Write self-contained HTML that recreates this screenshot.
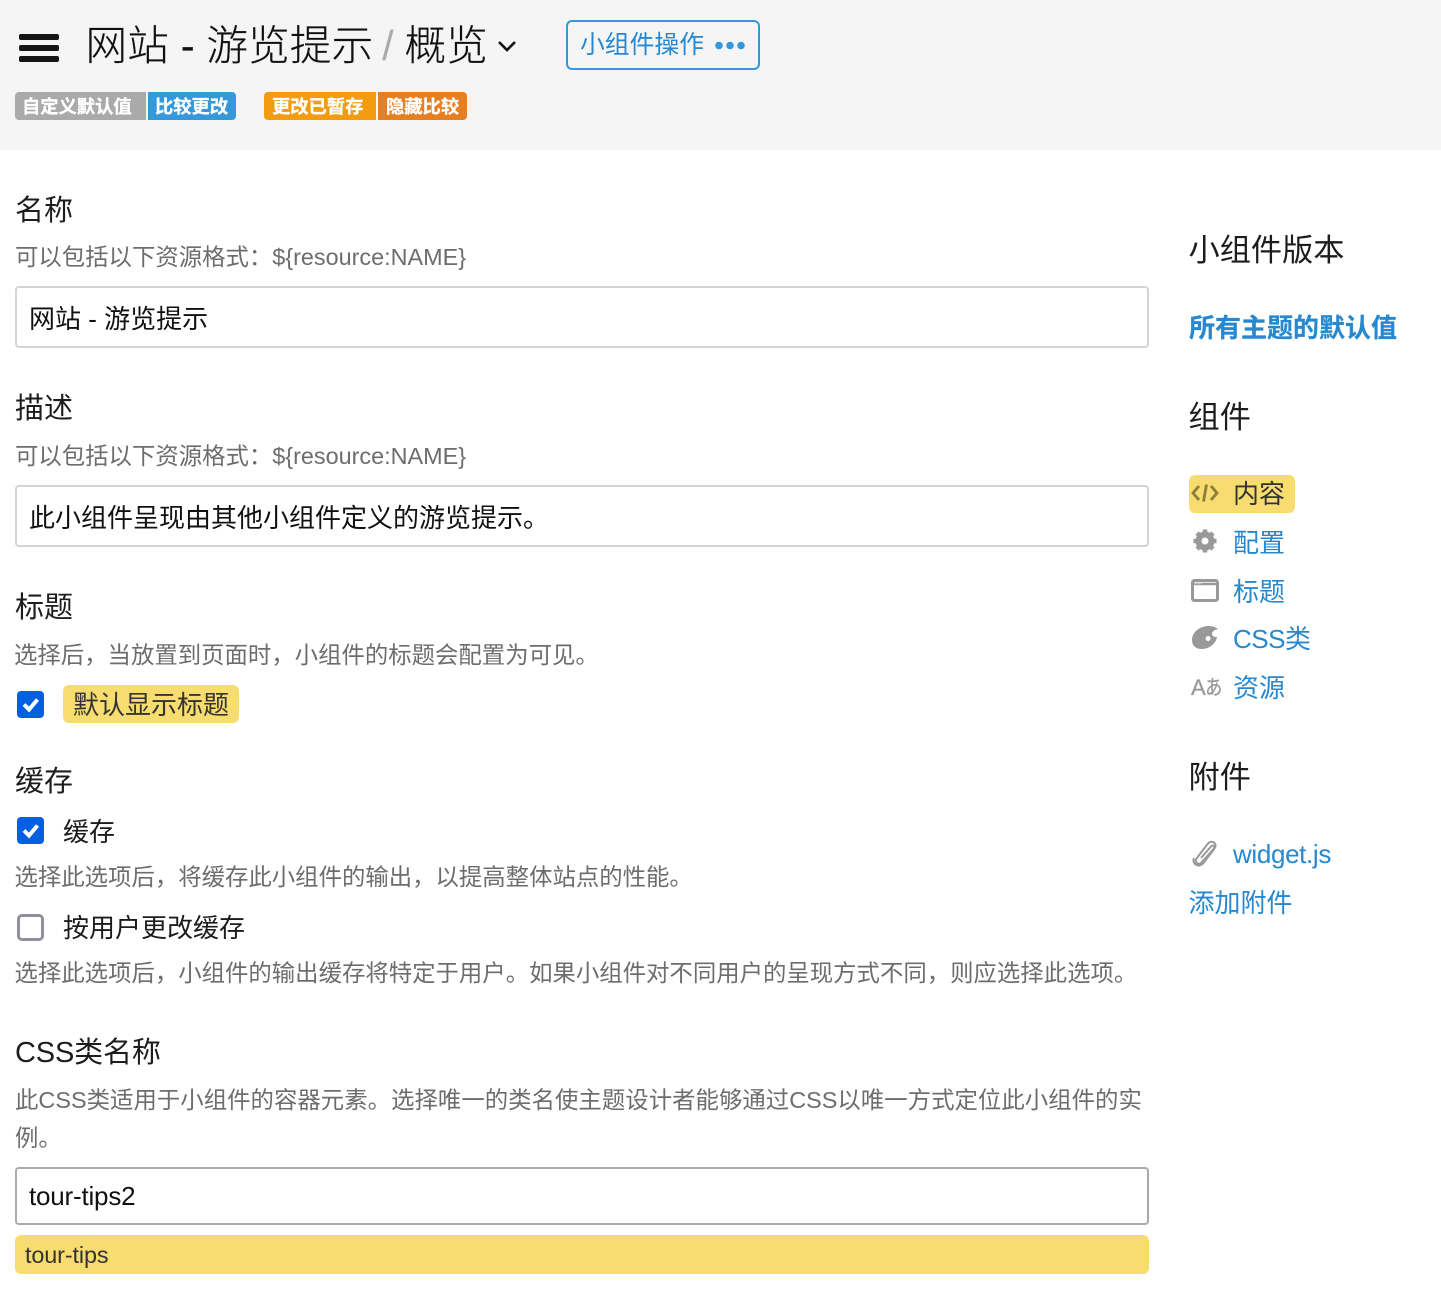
<!DOCTYPE html>
<html lang="zh"><head><meta charset="utf-8"><title>概览</title>
<style>
html,body{margin:0;padding:0;background:#fff}
body{width:1441px;height:1297px;position:relative;overflow:hidden;font-family:"Liberation Sans","Noto Sans CJK SC",sans-serif;color:#1c1c1c}
.t{position:absolute;white-space:nowrap}
.lb{font-size:29px;line-height:40px;left:15px;color:#1d1d1d}
.d{font-size:23.4px;line-height:36px;left:15px;color:#6d6d6d}
.i{position:absolute;left:15px;width:1134px;box-sizing:border-box;border:2px solid #d4d4d4;border-radius:4px;background:#fff;font-size:26px;padding-left:12px;color:#111;white-space:nowrap}
.h{font-size:31.2px;line-height:44px;left:1189px;color:#1d1d1d}
.a{font-size:26px;line-height:36px;left:1233px;color:#2788cf}
.b{position:absolute;top:92px;height:28px;line-height:29px;font-size:18.3px;font-weight:700;color:#fff;white-space:nowrap;box-sizing:border-box;padding-left:7px;-webkit-text-stroke:.3px #fff}
.cb{position:absolute;left:17px;width:27px;height:27px;box-sizing:border-box;border-radius:4px;background:#0060df}
.cb svg{display:block}
.y{position:absolute;background:#f7dc6f;border-radius:6px}
svg{position:absolute}
</style></head><body>
<div style="position:absolute;left:0;top:0;width:1441px;height:150px;background:#f5f5f5"></div>
<div style="position:absolute;left:19px;top:34px;width:40px;height:6px;background:#151515;border-radius:2px"></div>
<div style="position:absolute;left:19px;top:45px;width:40px;height:6px;background:#151515;border-radius:2px"></div>
<div style="position:absolute;left:19px;top:56px;width:40px;height:6px;background:#151515;border-radius:2px"></div>
<div class="t" style="left:85.500px;top:18px;font-size:41.6px;line-height:56px;font-weight:300;color:#111;letter-spacing:.15px;-webkit-text-stroke:.2px #111">网站 - 游览提示 <span style="color:#aaa;margin-left:-3px;margin-right:-1px;-webkit-text-stroke:0">/</span> 概览</div>
<svg style="left:497px;top:39px" width="20" height="14" viewBox="0 0 20 14"><path d="M2 3l8 8 8-8" fill="none" stroke="#111" stroke-width="2.6"/></svg>
<div style="position:absolute;left:566px;top:20px;width:194px;height:50px;box-sizing:border-box;border:2px solid #3498db;border-radius:6px"></div>
<div class="t" style="left:580px;top:28px;font-size:24.8px;line-height:36px;color:#2788cf">小组件操作</div>
<svg style="left:714px;top:38px" width="34" height="14"><circle cx="5" cy="7.500" r="3.800" fill="#3498db"/><circle cx="16" cy="7.500" r="3.800" fill="#3498db"/><circle cx="27" cy="7.500" r="3.800" fill="#3498db"/></svg>
<div class="b" style="left:15px;width:131px;background:#aaa;border-radius:4px 0 0 4px">自定义默认值</div>
<div class="b" style="left:148px;width:88px;background:#3498db;border-radius:0 4px 4px 0">比较更改</div>
<div class="b" style="left:264px;width:112px;background:#f39c12;border-radius:4px 0 0 4px;padding-left:8px">更改已暂存</div>
<div class="b" style="left:378px;width:89px;background:#e67e22;border-radius:0 4px 4px 0;padding-left:8px">隐藏比较</div>

<div class="t lb" style="top:191px">名称</div>
<div class="t d" style="top:239px">可以包括以下资源格式：${resource:NAME}</div>
<div class="i" style="top:286px;height:62px;line-height:62px">网站 - 游览提示</div>
<div class="t lb" style="top:389px">描述</div>
<div class="t d" style="top:438px">可以包括以下资源格式：${resource:NAME}</div>
<div class="i" style="top:485px;height:62px;line-height:62px">此小组件呈现由其他小组件定义的游览提示。</div>
<div class="t lb" style="top:588px">标题</div>
<div class="t d" style="top:637px;left:14px">选择后，当放置到页面时，小组件的标题会配置为可见。</div>
<div class="cb" style="top:691px"><svg width="27" height="27" viewBox="0 0 27 27"><path d="M7 13.500l5 5 8.500-10" fill="none" stroke="#fff" stroke-width="4"/></svg></div>
<div class="y" style="left:63px;top:685px;width:176px;height:38px"></div>
<div class="t" style="left:73px;top:687px;font-size:26px;line-height:36px;color:#333">默认显示标题</div>
<div class="t lb" style="top:762px">缓存</div>
<div class="cb" style="top:817px"><svg width="27" height="27" viewBox="0 0 27 27"><path d="M7 13.500l5 5 8.500-10" fill="none" stroke="#fff" stroke-width="4"/></svg></div>
<div class="t" style="left:63px;top:814px;font-size:26px;line-height:36px">缓存</div>
<div class="t d" style="top:859px;left:14.500px">选择此选项后，将缓存此小组件的输出，以提高整体站点的性能。</div>
<div class="cb" style="top:914px;background:#fff;border:3.500px solid #8f8f9d;border-radius:5px"></div>
<div class="t" style="left:63px;top:910px;font-size:26px;line-height:36px">按用户更改缓存</div>
<div class="t d" style="top:955px;left:14.500px">选择此选项后，小组件的输出缓存将特定于用户。如果小组件对不同用户的呈现方式不同，则应选择此选项。</div>
<div class="t lb" style="top:1033px;letter-spacing:-.15px">CSS类名称</div>
<div class="t d" style="top:1082px;letter-spacing:.03px">此CSS类适用于小组件的容器元素。选择唯一的类名使主题设计者能够通过CSS以唯一方式定位此小组件的实</div>
<div class="t d" style="top:1120px">例。</div>
<div class="i" style="top:1167px;height:58px;line-height:54px;border-color:#aaa;letter-spacing:-.2px">tour-tips2</div>
<div class="y" style="left:15px;top:1235px;width:1134px;height:39px"></div>
<div class="t" style="left:25px;top:1238px;font-size:23.4px;line-height:34px;color:#333;letter-spacing:-.12px">tour-tips</div>

<div class="t h" style="top:229px;left:1188.500px">小组件版本</div>
<div class="t" style="left:1189px;top:308px;font-size:26px;line-height:40px;font-weight:700;color:#2788cf;-webkit-text-stroke:.2px #2788cf">所有主题的默认值</div>
<div class="t h" style="top:396px;left:1188.500px">组件</div>
<div class="y" style="left:1189px;top:475px;width:106px;height:38px"></div>
<svg style="left:1191px;top:482px" width="28" height="22" viewBox="0 0 28 22"><path d="M8 4l-6 7 6 7M20 4l6 7-6 7M15.500 2.500l-3 17" fill="none" stroke="#8d7d3a" stroke-width="2.800"/></svg>
<div class="t a" style="top:476px;color:#333">内容</div>
<svg style="left:1192px;top:528px" width="26" height="26" viewBox="0 0 26 26"><circle cx="13" cy="13" r="6.500" fill="none" stroke="#999" stroke-width="6"/><path d="M13 1.500v23M1.500 13h23M5 5l16 16M21 5L5 21" stroke="#999" stroke-width="4.500" stroke-dasharray="4 15"/></svg>
<div class="t a" style="top:525px">配置</div>
<svg style="left:1191px;top:578px" width="28" height="24" viewBox="0 0 28 24"><rect x="1.500" y="2.500" width="25" height="20" rx="2" fill="none" stroke="#999" stroke-width="3"/><path d="M2 6h24" stroke="#999" stroke-width="2.500"/><path d="M4 5.500h7" stroke="#ddd" stroke-width="1.500" stroke-dasharray="1.500 1.500"/></svg>
<div class="t a" style="top:574px">标题</div>
<svg style="left:1191px;top:625px" width="28" height="26" viewBox="0 0 28 26"><path fill="#999" fill-rule="evenodd" d="M1 15C1 7 9 1 18 1c4 0 8 2 9 3-3 1-6 2-6 5 0 2 2 3 5 3-1 6-7 12-15 12C5 24 1 21 1 15zm16-4a2.500 2.500 0 1 0 .1 5 2.500 2.500 0 0 0-.1-5z"/></svg>
<div class="t a" style="top:621px;letter-spacing:-.5px">CSS<span style="letter-spacing:0">类</span></div>
<div class="t" style="left:1191px;top:674px;font-size:22px;line-height:28px;color:#999;letter-spacing:-.5px;-webkit-text-stroke:.3px #999"><span>A</span><span style="font-size:17px;font-family:'Noto Sans CJK JP',sans-serif;position:relative;top:-2px;display:inline-block;transform:scaleY(1.200)">あ</span></div>
<div class="t a" style="top:670px">资源</div>
<div class="t h" style="top:756px;left:1188.500px">附件</div>
<svg style="left:1191px;top:838px" width="28" height="30" viewBox="0 0 28 30"><path d="M10 20L20 8.500c2-2.300 4.500 0 2.500 2.500L10.500 24.500c-3 3.300-7.500-.3-5-4L17 5.500c4-4.500 10 .5 6.500 5L12.500 25c-4.500 5.500-12 1-9.500-5" fill="none" stroke="#999" stroke-width="2"/></svg>
<div class="t a" style="top:836px;letter-spacing:-.35px">widget.js</div>
<div class="t a" style="top:885px;left:1188.500px">添加附件</div>
</body></html>
